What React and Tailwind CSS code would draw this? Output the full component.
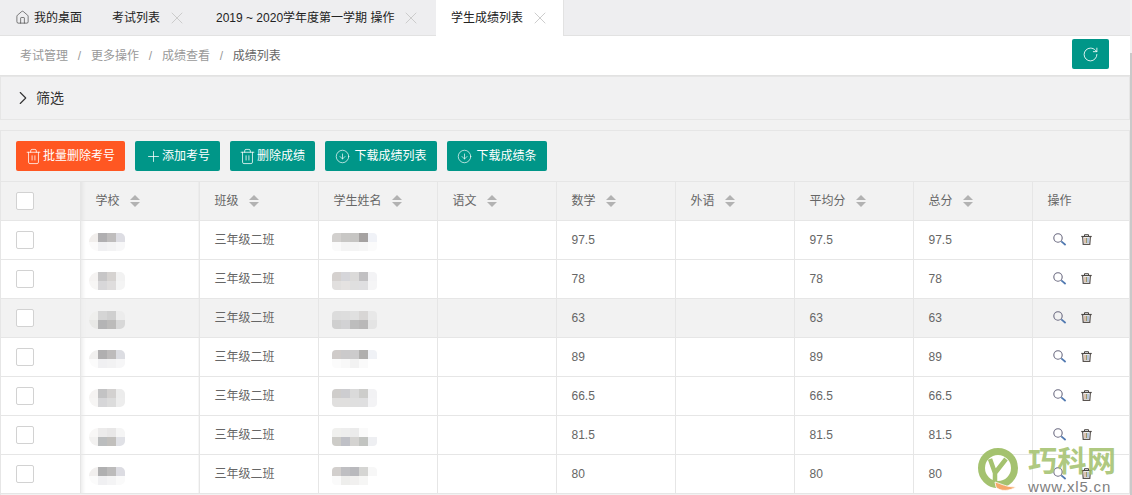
import { House, X, ChevronRight, Trash2, Plus, CircleArrowDown, RotateCw } from 'lucide-react'

const columns = ['学校', '班级', '学生姓名', '语文', '数学', '外语', '平均分', '总分']

const rows = [
  {
    school: ['bg-[#f1eeec]', 'bg-[#b0afb1]', 'bg-[#bfbdbd]', 'bg-[#dddde3]', 'bg-[#fbfafa]', 'bg-[#f0f0f2]', 'bg-[#f3f3f4]', 'bg-[#f7f7f8]'],
    name: ['bg-[#d2d0ce]', 'bg-[#c8c7c5]', 'bg-[#c6c5c3]', 'bg-[#a5a2a1]', 'bg-[#f0f2f7]', 'bg-[#fafafa]', 'bg-[#f4f4f4]', 'bg-[#f4f4f4]', 'bg-[#f6f6f6]', 'bg-[#fbfbfb]'],
    score: '97.5',
  },
  {
    school: ['bg-[#f5f3f2]', 'bg-[#c7c6c7]', 'bg-[#d6d3d1]', 'bg-[#f2f2f2]', 'bg-[#f7f6f5]', 'bg-[#d8d7d9]', 'bg-[#dfdddd]', 'bg-[#f4f4f4]'],
    name: ['bg-[#d5d1cf]', 'bg-[#d6d6da]', 'bg-[#dbdad9]', 'bg-[#c1c0c2]', 'bg-[#f3f3f5]', 'bg-[#e1dfde]', 'bg-[#e5e2e1]', 'bg-[#dfdfdf]', 'bg-[#dfdfe1]', 'bg-[#f5f5f6]'],
    score: '78',
  },
  {
    school: ['bg-[#efefed]', 'bg-[#d5d5d5]', 'bg-[#cfcfcf]', 'bg-[#ececec]', 'bg-[#e8e8e6]', 'bg-[#b4b4b5]', 'bg-[#bcbbba]', 'bg-[#d8d8d8]'],
    name: ['bg-[#dcdcdc]', 'bg-[#dddddd]', 'bg-[#e0e0e0]', 'bg-[#d8d6d5]', 'bg-[#e8e8e8]', 'bg-[#cfcfcf]', 'bg-[#d2d2d4]', 'bg-[#bdbdbd]', 'bg-[#b9b8b8]', 'bg-[#e4e4e4]'],
    score: '63',
    active: true,
  },
  {
    school: ['bg-[#f1f0ef]', 'bg-[#b0afb0]', 'bg-[#bdbbbb]', 'bg-[#dcdde2]', 'bg-[#fbfbfb]', 'bg-[#f0f0f2]', 'bg-[#f2f2f3]', 'bg-[#f6f6f7]'],
    name: ['bg-[#cfcbc9]', 'bg-[#cbcacb]', 'bg-[#cccbcc]', 'bg-[#b0afae]', 'bg-[#f0f2f6]', 'bg-[#fbfbfb]', 'bg-[#f8f8f8]', 'bg-[#f2f2f2]', 'bg-[#fafafa]', 'bg-[#ffffff]'],
    score: '89',
  },
  {
    school: ['bg-[#f5f3f2]', 'bg-[#c3c3c4]', 'bg-[#d3d1d0]', 'bg-[#ececec]', 'bg-[#f6f5f4]', 'bg-[#d6d6d8]', 'bg-[#dcdcdc]', 'bg-[#ededed]'],
    name: ['bg-[#cfcdcb]', 'bg-[#cdcdd0]', 'bg-[#dadada]', 'bg-[#cdcdcb]', 'bg-[#f2f2f4]', 'bg-[#e0dfde]', 'bg-[#e0dfde]', 'bg-[#dfdfdf]', 'bg-[#dfdfe0]', 'bg-[#f3f3f5]'],
    score: '66.5',
  },
  {
    school: ['bg-[#f8f7f6]', 'bg-[#ecebeb]', 'bg-[#e8e7e7]', 'bg-[#f5f5f5]', 'bg-[#f2f1f0]', 'bg-[#bbbdbe]', 'bg-[#c1bfbc]', 'bg-[#e0e1e6]'],
    name: ['bg-[#f0f0ee]', 'bg-[#eeeeee]', 'bg-[#ebebeb]', 'bg-[#fafafa]', 'bg-[#ffffff]', 'bg-[#cdccc8]', 'bg-[#bfc0c6]', 'bg-[#d4d3d1]', 'bg-[#c2c4c1]', 'bg-[#eeeff2]'],
    score: '81.5',
  },
  {
    school: ['bg-[#f1efee]', 'bg-[#b0b0b1]', 'bg-[#bcbbbb]', 'bg-[#dcdce2]', 'bg-[#fbfbfb]', 'bg-[#f0f0f2]', 'bg-[#f4f4f5]', 'bg-[#fafafa]'],
    name: ['bg-[#d2cfcd]', 'bg-[#bfbfc2]', 'bg-[#b9b9bd]', 'bg-[#d5d5d3]', 'bg-[#f7f7f7]', 'bg-[#fafafa]', 'bg-[#eeeeec]', 'bg-[#f1f0ef]', 'bg-[#f6f6f5]', 'bg-[#ffffff]'],
    score: '80',
  },
]

const buttons = [
  { label: '批量删除考号', icon: Trash2, width: 'w-[109px]', color: 'bg-[#ff5722]', iconClass: 'w-[17px] h-[17px] mr-[1px] -ml-[1px]' },
  { label: '添加考号', icon: Plus, width: 'w-[85px]', color: 'bg-[#009688]', iconClass: 'w-[17px] h-[17px]' },
  { label: '删除成绩', icon: Trash2, width: 'w-[85px]', color: 'bg-[#009688]', iconClass: 'w-[17px] h-[17px] mr-[1px] -ml-[1px]' },
  { label: '下载成绩列表', icon: CircleArrowDown, width: 'w-[112px]', color: 'bg-[#009688]', iconClass: 'w-[15px] h-[15px] mr-[4px]' },
  { label: '下载成绩条', icon: CircleArrowDown, width: 'w-[100px]', color: 'bg-[#009688]', iconClass: 'w-[15px] h-[15px] mr-[4px]' },
]

function Tab({ label, active, width }) {
  return (
    <div
      className={`relative z-10 flex items-center h-[36px] ${width} pl-[15px] ${
        active ? 'bg-white border-r border-[#e2e2e2]' : ''
      }`}
    >
      <span className="text-[#222] whitespace-nowrap">{label}</span>
      <X className="ml-[7px] -my-[4px] w-[20px] h-[20px] text-[#c8c8c8]" strokeWidth={1.1} />
    </div>
  )
}

function SortArrows() {
  return (
    <span className="flex flex-col gap-[2px] ml-[10px]">
      <span className="w-0 h-0 border-x-[5px] border-x-transparent border-b-[5px] border-b-[#b2b2b2]" />
      <span className="w-0 h-0 border-x-[5px] border-x-transparent border-t-[5px] border-t-[#b2b2b2]" />
    </span>
  )
}

function Checkbox() {
  return <div className="w-[18px] h-[18px] bg-white border border-[#d2d2d2] rounded-[2px]" />
}

function Mosaic({ tiles, cols, className = '' }) {
  return (
    <div
      className={`grid ${cols === 4 ? 'grid-cols-[repeat(4,9px)]' : 'grid-cols-[repeat(5,9px)]'} auto-rows-[9px] mt-[3px] w-fit overflow-hidden ${className}`}
    >
      {tiles.map((tile, i) => (
        <div key={i} className={tile} />
      ))}
    </div>
  )
}

function SearchIcon() {
  return (
    <svg width="14" height="13" viewBox="0 0 14 13" fill="none">
      <circle cx="5" cy="5" r="4.2" stroke="#6b6a80" strokeWidth="1.1" />
      <path d="M8.3 8.3 L12.6 12" stroke="#4f78b0" strokeWidth="1.7" />
    </svg>
  )
}

function TrashIcon() {
  return (
    <svg width="11" height="11" viewBox="0 0 11 11" fill="none">
      <path d="M0.3 2.5 H10.7" stroke="#4b4744" strokeWidth="1.2" />
      <path d="M3.5 2.2 V0.7 H7.5 V2.2" stroke="#4b4744" strokeWidth="1" />
      <path d="M1.6 2.8 L2.2 10.4 H8.8 L9.4 2.8" stroke="#5a5450" strokeWidth="1.2" />
      <path d="M4 4 V9" stroke="#c08a6a" strokeWidth="1" />
      <path d="M5.5 4 V9" stroke="#9a9a6a" strokeWidth="1" />
      <path d="M7 4 V9" stroke="#6f8fc0" strokeWidth="1" />
    </svg>
  )
}

function Cell({ children, className = '' }) {
  return <td className={`h-[39px] p-0 border-r border-b border-[#e6e6e6] ${className}`}>{children}</td>
}

export default function App() {
  return (
    <div className="relative flex w-[1132px] h-[495px] overflow-hidden bg-[#f2f2f2] text-[12px] font-['Liberation_Sans','Noto_Sans_CJK_SC',sans-serif]">
      <div className="w-[1130px] shrink-0 flex flex-col">
        {/* tabs */}
        <div className="flex h-[36px] shrink-0 bg-[#eeeef0] border-b border-[#e2e2e2]">
          <div className="flex items-center w-[97px] pl-[15px] h-[35px]">
            <House className="w-[15px] h-[15px] text-[#333] mr-[4px]" strokeWidth={1} />
            <span className="text-[#222]">我的桌面</span>
          </div>
          <Tab label="考试列表" width="w-[104px]" />
          <Tab label="2019 ~ 2020学年度第一学期 操作" width="w-[235px]" />
          <Tab label="学生成绩列表" width="w-[128px]" active />
        </div>

        {/* breadcrumb */}
        <div className="flex items-center justify-between h-[40px] shrink-0 bg-white border-b border-[#e2e2e2] pl-[20px] pr-[21px]">
          <div className="flex items-center text-[#999]">
            <span>考试管理</span>
            <span className="mx-[9.8px]">/</span>
            <span>更多操作</span>
            <span className="mx-[9.8px]">/</span>
            <span>成绩查看</span>
            <span className="mx-[9.8px]">/</span>
            <span className="text-[#666]">成绩列表</span>
          </div>
          <button className="self-start mt-[3px] flex items-center justify-center w-[37px] h-[30px] bg-[#009688] rounded-[2px]">
            <RotateCw className="w-[17px] h-[17px] text-white" strokeWidth={1.2} />
          </button>
        </div>

        {/* filter */}
        <div className="flex items-center h-[44px] shrink-0 bg-[#f1f1f2] border border-[#e6e6e6] pl-[11px] text-[14px] text-[#333]">
          <ChevronRight className="w-[22px] h-[22px] mr-[2px]" strokeWidth={1.2} />
          筛选
        </div>

        {/* list */}
        <div className="mt-[10px] flex-1 min-h-0 border-t border-l border-[#e6e6e6] overflow-hidden">
          <div className="flex gap-[10px] h-[50px] pl-[15px] pt-[10px] border-r border-[#e6e6e6]">
            {buttons.map((btn) => (
              <button
                key={btn.label}
                className={`flex items-center justify-center h-[30px] ${btn.width} ${btn.color} rounded-[2px] text-white text-[12px]`}
              >
                <btn.icon className={`${btn.iconClass} shrink-0`} strokeWidth={1.1} />
                {btn.label}
              </button>
            ))}
          </div>

          <table className="w-[1128px] table-fixed border-collapse border-t border-[#e6e6e6]">
            <colgroup>
              <col className="w-[79px]" />
              <col className="w-[119px]" />
              <col className="w-[119px]" />
              <col className="w-[119px]" />
              <col className="w-[119px]" />
              <col className="w-[119px]" />
              <col className="w-[119px]" />
              <col className="w-[119px]" />
              <col className="w-[119px]" />
              <col className="w-[97px]" />
            </colgroup>
            <thead>
              <tr className="bg-[#f2f2f2] text-[#666]">
                <Cell className="pl-[15px]">
                  <Checkbox />
                </Cell>
                {columns.map((col, i) => (
                  <Cell key={col} className={i === 0 ? 'bg-gradient-to-r from-[#e4e4e4] to-[#f2f2f2] to-[5px] pl-[15px]' : 'pl-[15px]'}>
                    <div className="flex items-center">
                      {col}
                      <SortArrows />
                    </div>
                  </Cell>
                ))}
                <Cell className="pl-[15px]">操作</Cell>
              </tr>
            </thead>
            <tbody className="text-[#666]">
              {rows.map((row, i) => (
                <tr key={i} className={row.active ? 'bg-[#f2f2f2]' : 'bg-white'}>
                  <Cell className="pl-[15px]">
                    <Checkbox />
                  </Cell>
                  <Cell className="bg-gradient-to-r from-[#ececec] to-transparent to-[5px] pl-[8px]">
                    <Mosaic tiles={row.school} cols={4} className="rounded-l-[9px] rounded-r-[5px]" />
                  </Cell>
                  <Cell className="pl-[15px]">三年级二班</Cell>
                  <Cell className="pl-[13px]">
                    <Mosaic tiles={row.name} cols={5} className="rounded-[4px]" />
                  </Cell>
                  <Cell />
                  <Cell className="pl-[15px]">{row.score}</Cell>
                  <Cell />
                  <Cell className="pl-[15px]">{row.score}</Cell>
                  <Cell className="pl-[15px]">{row.score}</Cell>
                  <Cell className="pl-[20px]">
                    <div className="flex items-center gap-[14px] -mt-[2px]">
                      <SearchIcon />
                      <TrashIcon />
                    </div>
                  </Cell>
                </tr>
              ))}
            </tbody>
          </table>
        </div>
      </div>

      {/* scrollbar */}
      <div className="flex-1 mt-[53px] bg-[#c9c9c9]" />

      {/* watermark */}
      <div className="absolute left-[975px] top-[447px] flex items-start gap-[9px]">
        <svg width="44" height="46" viewBox="0 0 44 46" fill="none">
          <circle cx="23" cy="21" r="16.5" stroke="#a4c26f" strokeWidth="7" />
          <path d="M15 12 L20 26 L20 37 M31 12 L20 26" stroke="#a4c26f" strokeWidth="4.5" />
          <path d="M20 35 C27 37 31 40 41 40 C35 44 25 45 21 40 Z" fill="#f5a86a" stroke="#ffffff" strokeWidth="0.8" />
        </svg>
        <div className="flex flex-col w-[90px]">
          <span className="text-[29px] leading-[31px] font-bold tracking-[0.5px] text-[#a4c26f]/90 whitespace-nowrap">巧科网</span>
          <span className="mt-[2px] text-[15px] leading-[14px] tracking-[0.8px] text-[#808080] whitespace-nowrap">www.xl5.cn</span>
        </div>
      </div>
    </div>
  )
}
